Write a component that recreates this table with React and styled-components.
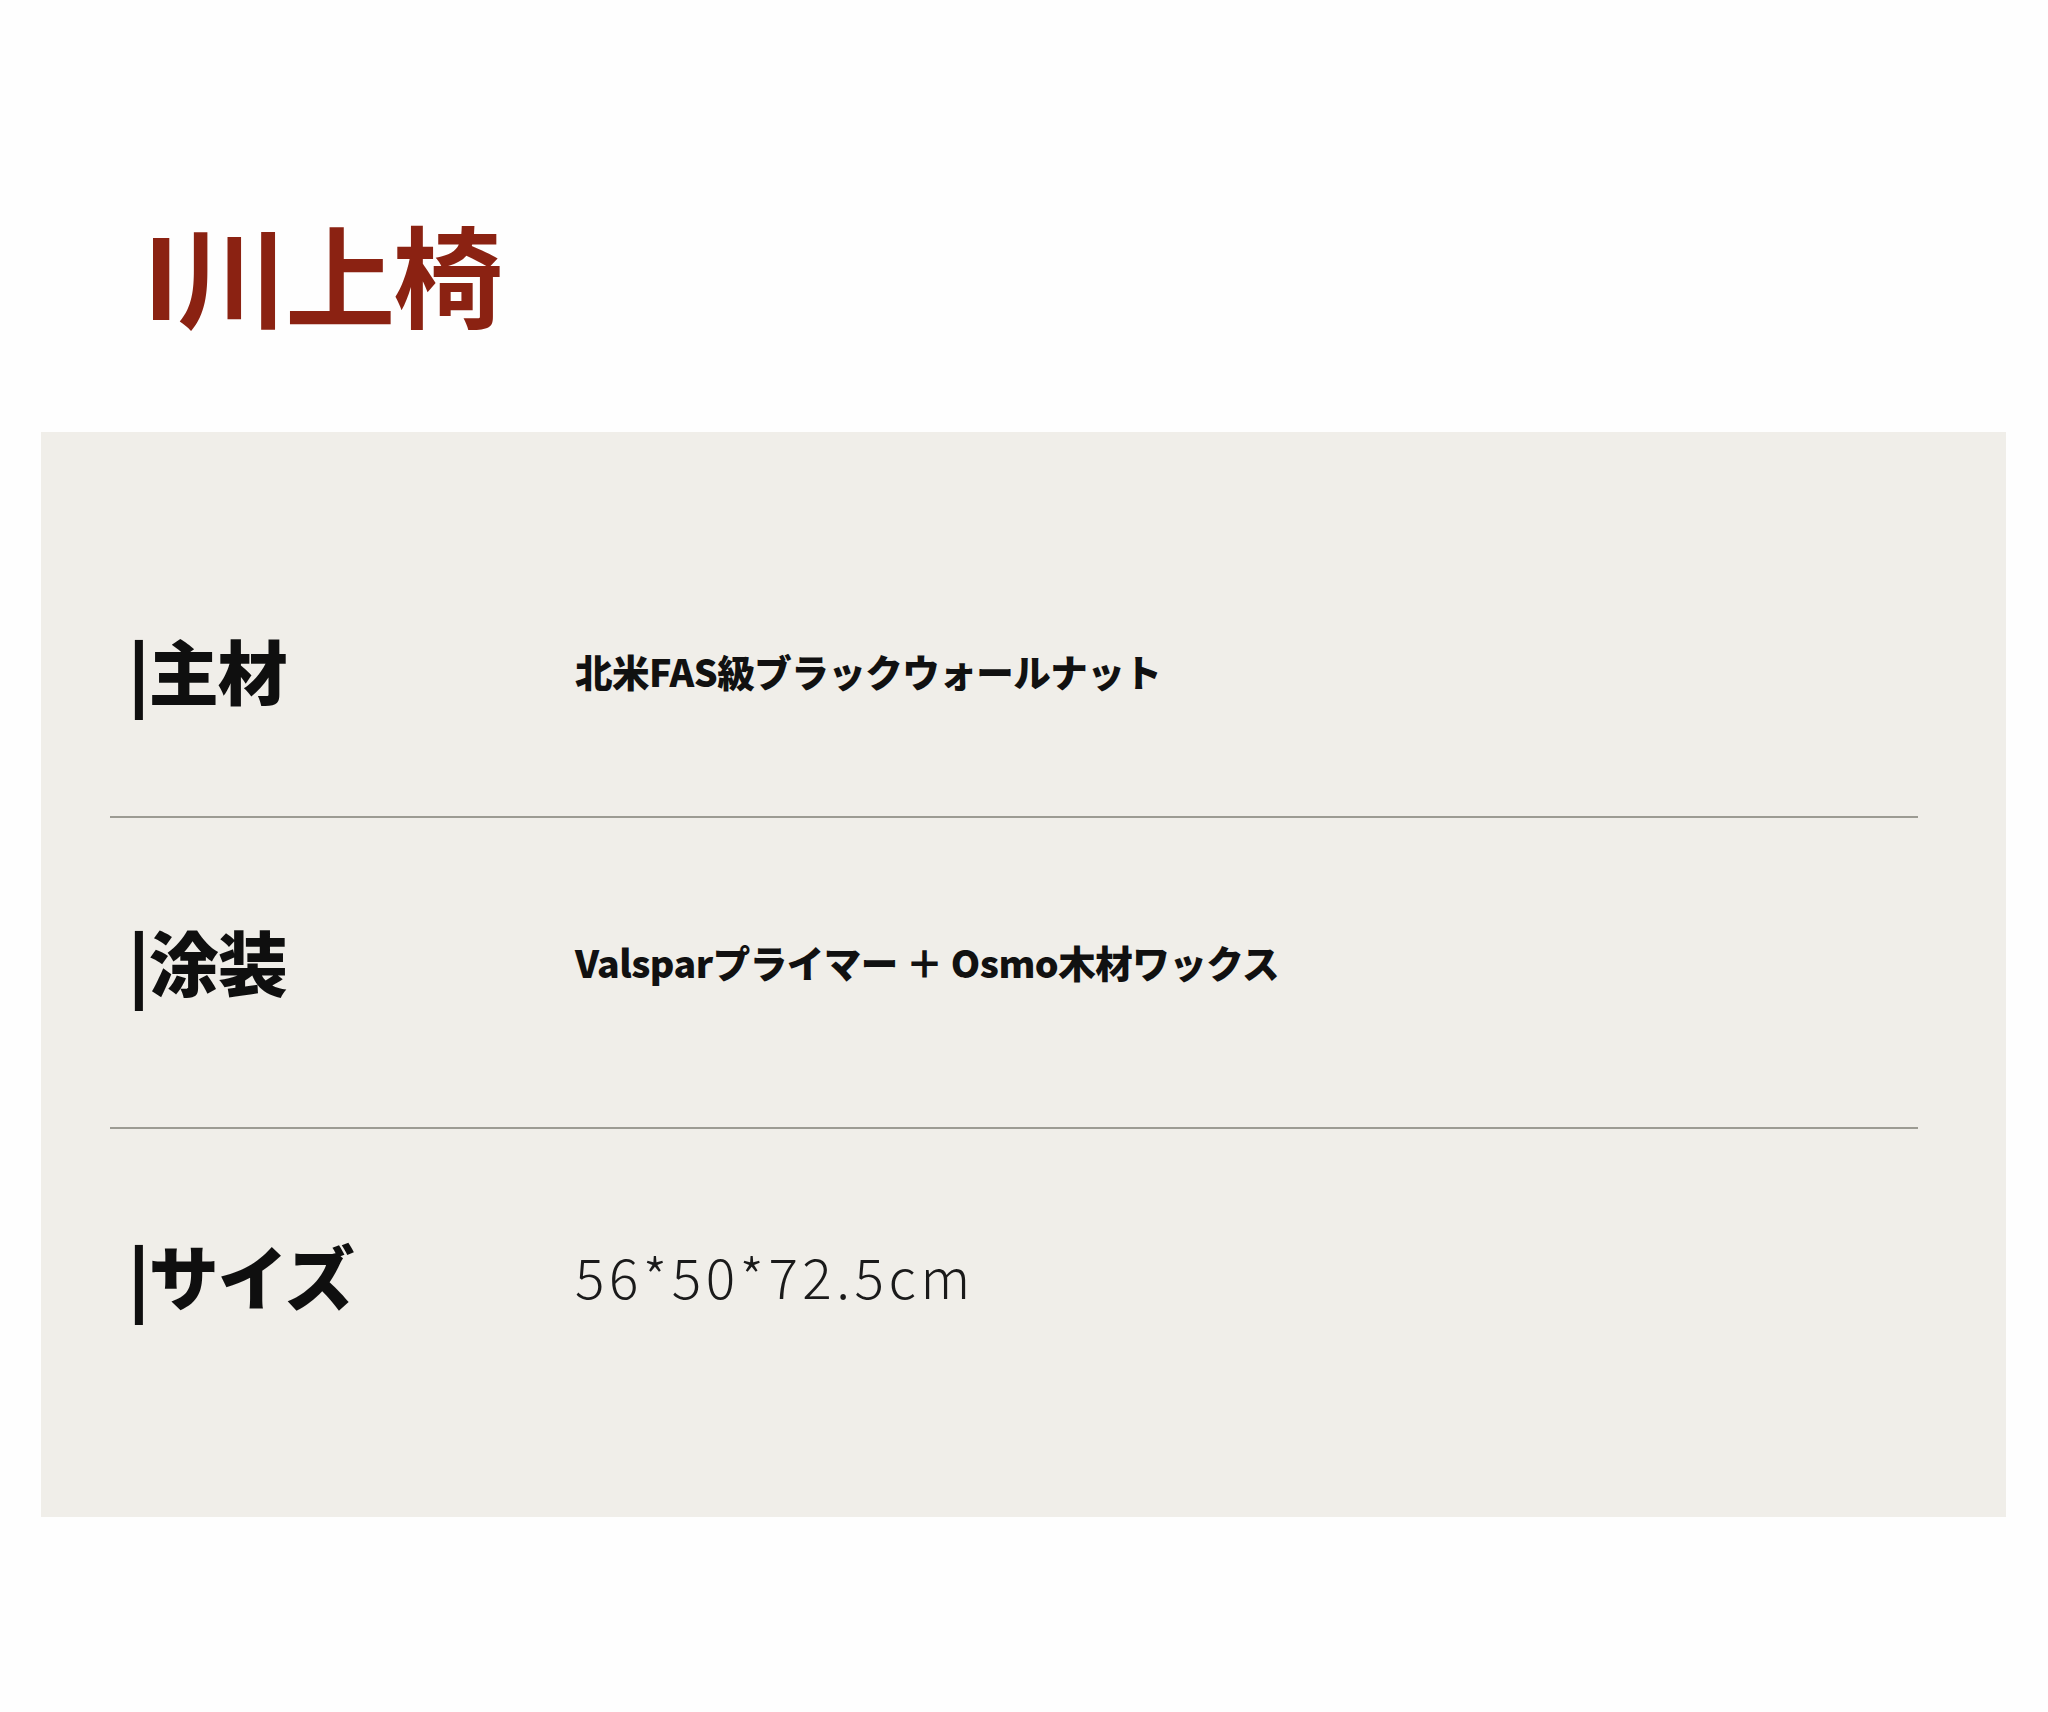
import React from 'react';
import styled, { createGlobalStyle } from 'styled-components';

const GlobalStyle = createGlobalStyle`
  html, body {
    margin: 0;
    padding: 0;
    background: #fefefe;
  }
  body {
    font-family: "Noto Sans CJK JP", "Noto Sans", sans-serif;
  }
`;

const Page = styled.div`
  width: 2048px;
  height: 1712px;
  padding-top: 206px;
  box-sizing: border-box;
`;

const Title = styled.h1`
  margin: 0 0 0 143px;
  height: 226px;
  font-size: 110px;
  line-height: 1.2;
  font-weight: 700;
  color: #8b2212;
  letter-spacing: -2px;
`;

const Panel = styled.section`
  margin-left: 41px;
  width: 1965px;
  height: 1085px;
  background: #f0eee9;
  padding: 115px 88px 0 69px;
  box-sizing: border-box;
`;

const Row = styled.div`
  display: grid;
  grid-template-columns: 447px 1fr;
  align-items: center;
  height: ${(p) => p.height}px;
  padding-left: 18px;
  padding-bottom: 22px;
  box-sizing: border-box;
  border-bottom: ${(p) => (p.last ? 'none' : '2px solid #9c9b93')};
`;

const Label = styled.div`
  font-size: 70px;
  font-weight: 900;
  color: #0f0f0f;
  line-height: 1.15;
  letter-spacing: -1px;
`;

const Value = styled.div`
  font-size: 37.5px;
  font-weight: 900;
  color: #111;
  line-height: 1.2;
  letter-spacing: -0.5px;
`;

const SizeValue = styled.div`
  font-size: 55px;
  font-weight: 300;
  color: #1a1a1a;
  letter-spacing: 4.5px;
  line-height: 1.2;
`;

const specs = [
  { label: '|主材', value: '北米FAS級ブラックウォールナット', height: 271 },
  { label: '|涂装', value: 'Valsparプライマー ＋ Osmo木材ワックス', height: 311 },
];

export default function App() {
  return (
    <Page>
      <GlobalStyle />
      <Title>I川上椅</Title>
      <Panel>
        {specs.map((s) => (
          <Row key={s.label} height={s.height}>
            <Label>{s.label}</Label>
            <Value>{s.value}</Value>
          </Row>
        ))}
        <Row height={314} last>
          <Label>|サイズ</Label>
          <SizeValue>56*50*72.5cm</SizeValue>
        </Row>
      </Panel>
    </Page>
  );
}
